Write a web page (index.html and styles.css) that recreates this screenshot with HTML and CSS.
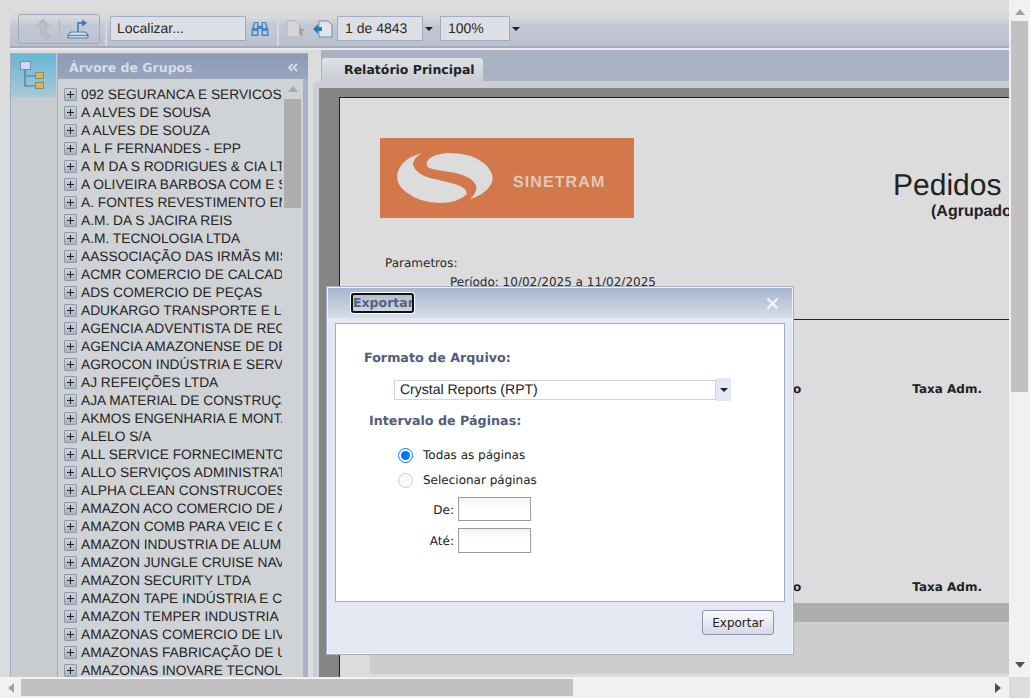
FILE: index.html
```html
<!DOCTYPE html>
<html lang="pt">
<head>
<meta charset="utf-8">
<title>Relatório Principal</title>
<link rel="stylesheet" href="styles.css">
</head>
<body>
<div class="viewport">
  <main class="main">
    <div class="toolbar">
      <div class="btn-group">
        <svg class="ic-up" width="18" height="22" viewBox="0 0 18 22"><path d="M9 1 L15 8 H12 V13 Q12 16 15 17 V20 H11 Q7 19 7 14 V8 H3 Z" fill="#bcbfc3" stroke="#aeb1b7"/></svg>
        <span class="vsep"></span>
        <svg class="ic-export" width="22" height="22" viewBox="0 0 22 22"><path d="M4 14 Q1 16 1 18 V20 H21 V18 Q21 16 18 14 Z" fill="#cfd8e2" stroke="#4f86b8" stroke-width="1.2"/><path d="M1 17.5 H21" stroke="#4f86b8"/><path d="M11 14 V5 H15" fill="none" stroke="#4f86b8" stroke-width="1.8"/><path d="M15 1.5 L20 5 L15 8.5 Z" fill="#3f76ac"/></svg>
      </div>
      <span class="tsep tsep-a"></span>
      <div class="field field-find">Localizar...</div>
      <svg class="ic-bino" width="18" height="16" viewBox="0 0 18 16"><path d="M3 1 H7.5 V5 H10.5 V1 H15 L17.5 9 V15 H10.5 V8 H7.5 V15 H0.5 V9 Z" fill="#4f86b8"/><path d="M2 10 H6 V13.5 H2 Z M12 10 H16 V13.5 H12 Z M4 2 H6 V7 H3 Z M12 2 H14 L15 7 H12 Z" fill="#b5cce2"/></svg>
      <span class="tsep tsep-b"></span>
      <svg class="ic-doc1" width="20" height="18" viewBox="0 0 20 18"><path d="M1 1 H10 L14 5 V17 H1 Z" fill="#d5d6d8" stroke="#b3b5b8"/><path d="M13 6 L15 9 H19 L16 12 L17 16 L13 14 Z" fill="#9ea2a8"/></svg>
      <svg class="ic-doc2" width="20" height="18" viewBox="0 0 20 18"><path d="M6 1 H15 L19 5 V17 H6 Z" fill="#e2e5ea" stroke="#6c8fb2"/><path d="M0 9 L5 4 V7 H9 V11 H5 V14 Z" fill="#2e78bd"/></svg>
      <div class="field field-page">1 de 4843</div>
      <span class="caret caret-page"></span>
      <div class="field field-zoom">100%</div>
      <span class="caret caret-zoom"></span>
    </div>

    <div class="workspace">
      <aside class="rail">
        <div class="rail-tile">
          <svg width="24" height="28" viewBox="0 0 24 28"><path d="M5 8 V25 H15 M5 15 H15" fill="none" stroke="#4f7596" stroke-width="1.2"/><rect x="0.5" y="0.5" width="10" height="8" fill="#cfdbe8" stroke="#6f8eaa"/><rect x="15.5" y="11.5" width="8" height="6" fill="#e0b64a" stroke="#8a8a70"/><rect x="15.5" y="21.5" width="8" height="6" fill="#e0b64a" stroke="#8a8a70"/></svg>
        </div>
      </aside>

      <section class="tree">
        <header class="tree-head">
          <span>Árvore de Grupos</span>
          <svg class="collapse" width="10" height="9" viewBox="0 0 10 9"><path d="M4.5 1 L1 4.5 L4.5 8 M9 1 L5.5 4.5 L9 8" fill="none" stroke="#d8dde6" stroke-width="1.8"/></svg>
        </header>
        <div class="tree-body">
          <ul class="tree-list">
            <li>092 SEGURANCA E SERVICOS</li>
            <li>A ALVES DE SOUSA</li>
            <li>A ALVES DE SOUZA</li>
            <li>A L F FERNANDES - EPP</li>
            <li>A M DA S RODRIGUES &amp; CIA LTDA</li>
            <li>A OLIVEIRA BARBOSA COM E SERV</li>
            <li>A. FONTES REVESTIMENTO EM</li>
            <li>A.M. DA S JACIRA REIS</li>
            <li>A.M. TECNOLOGIA LTDA</li>
            <li>AASSOCIAÇÃO DAS IRMÃS MISSIO</li>
            <li>ACMR COMERCIO DE CALCADOS</li>
            <li>ADS COMERCIO DE PEÇAS</li>
            <li>ADUKARGO TRANSPORTE E LOG</li>
            <li>AGENCIA ADVENTISTA DE RECURSOS</li>
            <li>AGENCIA AMAZONENSE DE DESENV</li>
            <li>AGROCON INDÚSTRIA E SERVIÇOS</li>
            <li>AJ REFEIÇÕES LTDA</li>
            <li>AJA MATERIAL DE CONSTRUÇÃO</li>
            <li>AKMOS ENGENHARIA E MONTAGEM</li>
            <li>ALELO S/A</li>
            <li>ALL SERVICE FORNECIMENTO DE</li>
            <li>ALLO SERVIÇOS ADMINISTRATIVOS</li>
            <li>ALPHA CLEAN CONSTRUCOES</li>
            <li>AMAZON ACO COMERCIO DE ACO</li>
            <li>AMAZON COMB PARA VEIC E CIA</li>
            <li>AMAZON INDUSTRIA DE ALUMINIO</li>
            <li>AMAZON JUNGLE CRUISE NAVEGACAO</li>
            <li>AMAZON SECURITY LTDA</li>
            <li>AMAZON TAPE INDÚSTRIA E COM</li>
            <li>AMAZON TEMPER INDUSTRIA DE</li>
            <li>AMAZONAS COMERCIO DE LIVROS</li>
            <li>AMAZONAS FABRICAÇÃO DE UTENS</li>
            <li>AMAZONAS INOVARE TECNOLOGIA</li>
          </ul>
          <div class="tree-scroll">
            <svg class="tree-up" width="10" height="6" viewBox="0 0 10 6"><path d="M5 0 L10 6 H0 Z" fill="#a9a9a9"/></svg>
            <div class="tree-thumb"></div>
          </div>
        </div>
      </section>

      <section class="report">
        <div class="tabbar"><div class="tab">Relatório Principal</div></div>
        <div class="report-frame">
          <div class="report-canvas">
            <article class="page">
              <div class="page-head">
                <svg class="logo" width="254" height="80" viewBox="0 0 254 80">
                  <rect width="254" height="80" fill="#d2784a"/>
                  <path d="M42 15 Q24 20 19 31 Q13 44 26 54 Q40 65 60 65 Q78 65 87 56 Q86 50 78 47 Q65 43 50 40 Q36 36 33 27 Q33 20 42 15 Z" fill="#dcdcdc"/>
                  <path d="M47 24 Q50 16 70 15 Q92 15 105 26 Q117 38 110 48 Q104 57 90 61 Q98 54 96 47 Q92 39 76 35 Q62 33 52 31 Q45 29 47 24 Z" fill="#dcdcdc"/>
                  <text class="logo-text" x="133" y="49">SINETRAM</text>
                </svg>
                <div class="page-title">
                  <h1>Pedidos</h1>
                  <h2>(Agrupado por Empresa)</h2>
                </div>
              </div>
              <p class="param">Parametros:</p>
              <p class="param param-sub">Período: 10/02/2025 a 11/02/2025</p>
              <hr class="rule">
              <div class="cols cols-a"><span class="col-o">o</span><span class="col-tx">Taxa Adm.</span></div>
              <div class="cols cols-b"><span class="col-o">o</span><span class="col-tx">Taxa Adm.</span></div>
              <div class="dark-band"></div>
              <div class="light-band"></div>
            </article>
          </div>
        </div>
      </section>
    </div>

    <div class="dialog" role="dialog">
      <header class="dialog-head">
        <span class="dialog-title">Exportar</span>
        <svg class="dialog-close" width="13" height="13" viewBox="0 0 13 13"><path d="M1.5 1.5 L11.5 11.5 M11.5 1.5 L1.5 11.5" stroke="#f2f4f8" stroke-width="2.2"/></svg>
      </header>
      <div class="dialog-body">
        <div class="label label-format">Formato de Arquivo:</div>
        <div class="select-row">
          <div class="select-box">Crystal Reports (RPT)</div>
          <div class="select-btn"><span class="caret"></span></div>
        </div>
        <div class="label label-range">Intervalo de Páginas:</div>
        <label class="radio-row radio-first"><input type="radio" name="r" checked>Todas as páginas</label>
        <label class="radio-row"><input type="radio" name="r" disabled>Selecionar páginas</label>
        <div class="range-row range-from"><span class="range-label">De:</span><input class="range-input" type="text"></div>
        <div class="range-row range-to"><span class="range-label">Até:</span><input class="range-input" type="text"></div>
      </div>
      <footer class="dialog-foot"><button class="export-btn" type="button">Exportar</button></footer>
    </div>
  </main>

  <div class="vscroll">
    <svg class="arrow" width="10" height="6" viewBox="0 0 10 6"><path d="M5 0 L10 6 H0 Z" fill="#a3a3a3"/></svg>
    <div class="vthumb"></div>
    <svg class="arrow arrow-end" width="10" height="6" viewBox="0 0 10 6"><path d="M5 6 L10 0 H0 Z" fill="#505050"/></svg>
  </div>
  <div class="hscroll">
    <svg class="arrow" width="6" height="10" viewBox="0 0 6 10"><path d="M0 5 L6 0 V10 Z" fill="#a3a3a3"/></svg>
    <div class="hthumb"></div>
    <svg class="arrow arrow-end" width="6" height="10" viewBox="0 0 6 10"><path d="M6 5 L0 0 V10 Z" fill="#505050"/></svg>
  </div>
  <div class="corner"></div>
</div>
</body>
</html>
```
FILE: styles.css
```css
* { box-sizing: border-box; }
html, body { margin: 0; height: 100%; overflow: hidden; }
body {
  font-family: "Liberation Sans", Arial, sans-serif;
  color: #222;
  background: #dcdcdc;
  text-rendering: geometricPrecision;
}

.viewport {
  display: grid;
  grid-template-columns: 1009px 21px;
  grid-template-rows: 677px 21px;
  width: 1030px;
  height: 698px;
}

.main {
  position: relative;
  display: flex;
  flex-direction: column;
  padding: 11px 0 0 10px;
  background: #dcdcdc;
  overflow: hidden;
}

/* Toolbar */
.toolbar {
  flex: none;
  display: flex;
  align-items: center;
  height: 39px;
  padding: 0 0 4px 8px;
  background: linear-gradient(#d9d9db 0, #d9d9db 6px, #c3c9d4 14px, #b9c1cf 35px, #a9a9b8 35px, #a9a9b8 37px, #e8e8ee 37px);
}
.btn-group {
  display: flex;
  align-items: center;
  width: 82px;
  height: 30px;
  border: 1px solid #9eaabf;
  border-radius: 3px;
  padding-left: 15px;
}
.ic-up { flex: none; }
.vsep { width: 1px; height: 18px; margin: 0 7px; background: #aeb5c2; }
.ic-export { flex: none; }
.tsep { width: 2px; height: 35px; background: #d4d8de; }
.tsep-a { margin: 0 3px 0 5px; }
.tsep-b { margin: 0 7px 0 8px; }
.field {
  display: flex;
  align-items: center;
  height: 25px;
  font-size: 14px;
  color: #2a2a2a;
  border: 1px solid #9fadc6;
  background: #dcdfe4;
  padding: 0 0 1px 7px;
}
.field-find { width: 136px; padding-left: 6px; }
.ic-bino { margin-left: 5px; }
.ic-doc2 { margin-left: 7px; }
.field-page { width: 86px; margin-left: 4px; }
.field-zoom { width: 70px; }
.caret {
  display: block;
  width: 0;
  height: 0;
  border-left: 4px solid transparent;
  border-right: 4px solid transparent;
  border-top: 4px solid #222;
}
.caret-page { margin: 0 7px 0 2px; }
.caret-zoom { margin-left: 2px; }

/* Workspace */
.workspace { flex: 1; display: flex; min-height: 0; }
.rail {
  flex: none;
  width: 47px;
  margin-top: 3px;
  border-left: 1px solid #a0adc5;
  border-top: 1px solid #a0adc5;
  background: #c8ccd1;
}
.rail-tile {
  height: 43px;
  width: 45px;
  padding: 7px 0 0 9px;
  background: linear-gradient(#67b6d6, #a9c9d4);
}
.rail-tile svg { display: block; }

.tree {
  flex: none;
  width: 251px;
  margin-top: 3px;
  display: flex;
  flex-direction: column;
  border-top: 1px solid #a0adc5;
  border-left: 1px solid #a0adc5;
  background: #a7b2c6;
}
.tree-head {
  flex: none;
  display: flex;
  justify-content: space-between;
  align-items: center;
  height: 25px;
  padding: 1px 10px 0 11px;
  font-family: "DejaVu Sans", sans-serif;
  font-size: 12.5px;
  font-weight: bold;
  color: #d8dde6;
  background: linear-gradient(#8d9cb6, #97a5bd);
}
.tree-body {
  flex: 1;
  min-height: 0;
  display: flex;
  width: 245px;
  background: #d0d3d6;
  overflow: hidden;
}
.tree-list {
  flex: none;
  width: 224px;
  margin: 0;
  padding: 6px 0 0 6px;
  list-style: none;
  overflow: hidden;
}
.tree-list li {
  position: relative;
  height: 18px;
  line-height: 20px;
  padding-left: 17px;
  font-size: 13.75px;
  white-space: nowrap;
  color: #242424;
}
.tree-list li::before {
  content: "";
  position: absolute;
  left: 0;
  top: 3px;
  width: 11px;
  height: 11px;
  border: 1px solid #8c99ae;
  border-radius: 1px;
  background:
    linear-gradient(#1f1f1f, #1f1f1f) center / 7px 1px no-repeat,
    linear-gradient(#1f1f1f, #1f1f1f) center / 1px 7px no-repeat,
    linear-gradient(#cdd1d7, #abb3bf);
}
.tree-scroll {
  flex: none;
  width: 19px;
  margin-left: 2px;
  padding-top: 7px;
}
.tree-up { display: block; margin: 0 0 7px 4px; }
.tree-thumb { width: 17px; height: 109px; background: #adadad; }

/* Report */
.report { flex: 1; min-width: 0; display: flex; flex-direction: column; margin-left: 5px; }
.tabbar {
  flex: none;
  height: 31px;
  padding: 7px 0 0 8px;
  background: linear-gradient(90deg, #dcdcdc 8px, #aab3c3 8px);
}
.tab {
  width: 163px;
  height: 24px;
  padding: 4px 0 0 22px;
  border: 1px solid #a9b4c8;
  border-bottom: 0;
  border-radius: 4px 4px 0 0;
  font-family: "DejaVu Sans", sans-serif;
  font-size: 12.5px;
  font-weight: bold;
  color: #222;
  background: linear-gradient(#dfe2e6, #c9ced6);
}
.report-frame {
  flex: 1;
  min-height: 0;
  padding: 7px 0 0 6px;
  border-radius: 5px 0 0 0;
  background: #cbcfd5;
}
.report-canvas {
  height: 100%;
  padding: 9px 0 0 20px;
  background: #858585;
  overflow: hidden;
}
.page {
  width: 1000px;
  height: 700px;
  padding: 40px 0 0 0;
  border-top: 1px solid #222;
  border-left: 1px solid #222;
  background: #dcdcdc;
  font-family: "DejaVu Sans", sans-serif;
  font-size: 12px;
  color: #2b2b2b;
}
.page-head { display: flex; height: 80px; }
.logo { flex: none; margin-left: 40px; }
.logo-text { font: bold 16px "Liberation Sans", sans-serif; letter-spacing: 1.1px; fill: #e0c8bb; }
.page-title { margin: 30px 0 0 259px; white-space: nowrap; }
.page-title h1 { margin: 0; font: 30px/35px "Liberation Sans", sans-serif; color: #222; }
.page-title h2 { margin: 0 0 0 38px; font: bold 16px/18px "Liberation Sans", sans-serif; color: #222; }
.param { margin: 36px 0 0 45px; line-height: 18px; }
.param-sub { margin: 1px 0 0 110px; }
.rule { margin: 28px 0 0 40px; height: 1px; border: 0; background: #222; }
.cols { display: flex; height: 18px; line-height: 18px; font-weight: bold; color: #222; }
.cols-a { margin-top: 60px; }
.cols-b { margin-top: 180px; }
.col-o { margin-left: 453px; }
.col-tx { margin-left: 111px; }
.dark-band { height: 19px; margin: 7px 0 0 30px; background: #adadad; }
.light-band { height: 52px; margin-left: 30px; background: #cdcdcd; }

/* Dialog */
.dialog {
  position: absolute;
  left: 326px;
  top: 286px;
  width: 468px;
  height: 369px;
  display: flex;
  flex-direction: column;
  border: 1px solid #a4afc5;
  box-shadow: inset 0 0 0 1px #f2f4f9;
  background: #e4e8f2;
}
.dialog-head {
  flex: none;
  display: flex;
  justify-content: space-between;
  align-items: center;
  height: 30px;
  margin: 1px 1px 0;
  padding: 0 13px 0 23px;
  background: linear-gradient(#a7b6cf, #d5dde9);
}
.dialog-title {
  height: 20px;
  line-height: 16px;
  border: 2px solid #111;
  border-radius: 3px;
  box-shadow: 0 0 0 1px #fff;
  font-family: "DejaVu Sans", sans-serif;
  font-size: 12.5px;
  font-weight: bold;
  color: #56627d;
  white-space: nowrap;
  width: 63px;
  overflow: hidden;
}
.dialog-close { display: block; }
.dialog-body {
  flex: none;
  height: 279px;
  margin: 5px 8px 0;
  border: 1px solid #9fadc7;
  background: #fff;
  font-family: "DejaVu Sans", sans-serif;
  font-size: 12px;
  color: #222;
}
.label { font-weight: bold; font-size: 12.7px; line-height: 18px; color: #525e78; }
.label-format { margin: 25px 0 0 28px; }
.select-row { display: flex; align-items: center; margin: 11px 0 0 58px; height: 23px; }
.select-box {
  width: 322px;
  height: 20px;
  padding-left: 5px;
  border: 1px solid #c5d6ec;
  font-family: "Liberation Sans", sans-serif;
  font-size: 14px;
  line-height: 17px;
  color: #222;
}
.select-btn { width: 15px; height: 23px; display: flex; align-items: center; justify-content: center; background: #e4e8f2; }
.label-range { margin: 11px 0 0 33px; }
.radio-row { display: flex; align-items: center; height: 16px; margin-left: 62px; }
.radio-row input { width: 15px; height: 15px; margin: 0 10px 0 0; }
.radio-first { margin-top: 17px; }
.radio-row + .radio-row { margin-top: 9px; }
.range-row { display: flex; align-items: center; }
.range-label { width: 118px; text-align: right; margin-right: 4px; }
.range-input {
  width: 73px;
  height: 24px;
  border: 1px solid #9a9a9a;
  background: linear-gradient(#f0f3f9, #fff 10px);
  padding: 0;
  outline: 0;
}
.range-from { margin-top: 9px; }
.range-from .range-label { padding-top: 2px; }
.range-to { margin-top: 7px; }
.range-to .range-input { height: 25px; }
.dialog-foot { flex: 1; display: flex; justify-content: flex-end; padding: 8px 19px 0 0; }
.export-btn {
  width: 72px;
  height: 25px;
  padding: 0;
  border: 1px solid #8e93b4;
  border-radius: 3px;
  background: linear-gradient(#fafafc, #d8d8e8);
  font-family: "DejaVu Sans", sans-serif;
  font-size: 12px;
  color: #222;
}

/* Page scrollbars */
.vscroll { display: flex; flex-direction: column; align-items: center; background: #f1f1f1; }
.vscroll .arrow { flex: none; margin: 9px 0 6px; }
.vthumb { width: 17px; height: 371px; background: #c1c1c1; }
.vscroll .arrow-end { margin: auto 0 9px; }
.hscroll { display: flex; align-items: center; background: #f1f1f1; padding: 0 8px; }
.hscroll .arrow { flex: none; }
.hthumb { width: 552px; height: 17px; margin-left: 7px; background: #c1c1c1; }
.hscroll .arrow-end { margin-left: auto; }
.corner { background: #dcdcdc; }
```
